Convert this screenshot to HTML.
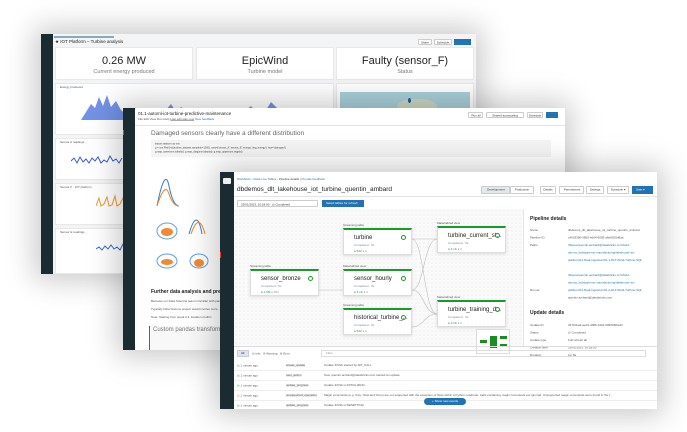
<!DOCTYPE html>
<html><head><meta charset="utf-8"><style>
*{margin:0;padding:0;box-sizing:border-box}
body{width:687px;height:432px;overflow:hidden;background:#fff;font-family:"Liberation Sans",sans-serif;position:relative;color:#222}
.a{position:absolute}
.win{position:absolute;background:#fff;box-shadow:0 0 28px 6px rgba(0,0,0,.22);overflow:hidden}
.sb{position:absolute;left:0;top:0;bottom:0;background:#1b2b32}
.card{position:absolute;background:#fff;border:1px solid #e8e8e8}
.t{position:absolute;white-space:nowrap}
.s{position:absolute;white-space:nowrap;font-size:6px;transform:scale(.5);transform-origin:0 0}
.node{position:absolute;background:#fff;border:1px solid #ddd;border-top:2px solid #1a9b29;box-shadow:0 1px 3px rgba(0,0,0,.12)}
.node b{position:absolute;left:10px;top:5px;font-size:6px;font-weight:normal;color:#222;white-space:nowrap}
.node i{position:absolute;left:10px;top:14px;font-size:6px;color:#888;font-style:normal;transform:scale(.5);transform-origin:0 0;white-space:nowrap}
.node s{position:absolute;left:10px;top:20px;font-size:6px;color:#1a9b29;text-decoration:none;transform:scale(.5);transform-origin:0 0;white-space:nowrap}
.node u{position:absolute;right:5px;top:5px;width:5px;height:5px;border:1px solid #1a9b29;border-radius:50%}
.lbl{position:absolute;font-size:6px;color:#555;transform:scale(.5);transform-origin:0 0;white-space:nowrap}
.btn{position:absolute;border:1px solid #ccc;background:#fff;color:#333;border-radius:1px;overflow:hidden}
.btn span{position:absolute;left:-50%;width:200%;top:0;text-align:center;font-size:6px;line-height:12px;transform:scale(.5);transform-origin:50% 0;white-space:nowrap}
.row{position:absolute;left:14px;right:0;height:10px;border-bottom:1px solid #eee;color:#555}
</style></head><body>

<!-- BACK WINDOW -->
<div class="win" style="left:41px;top:34px;width:435px;height:240px;background:#f3f4f5">
 <div class="sb" style="width:12px"></div>
 <div class="a" style="left:13px;top:2px;width:60px;height:1.5px;background:#8ab"></div>
 <div class="t" style="left:14px;top:5px;font-size:4.5px;color:#222">★ IOT Platform – Turbine analysis</div>
 <div class="btn" style="left:377px;top:5px;width:14px;height:6px"><span>Share</span></div>
 <div class="btn" style="left:393px;top:5px;width:18px;height:6px"><span>Schedule</span></div>
 <div class="a" style="left:413px;top:5px;width:17px;height:6px;background:#2272b4"></div>
 <div class="card" style="left:14px;top:13px;width:138px;height:33px"><div class="t" style="left:0;right:0;text-align:center;top:7px;font-size:11px">0.26 MW</div><div class="t" style="left:0;right:0;text-align:center;top:21px;font-size:5.5px;color:#777">Current energy produced</div></div>
 <div class="card" style="left:155px;top:13px;width:138px;height:33px"><div class="t" style="left:0;right:0;text-align:center;top:7px;font-size:11px">EpicWind</div><div class="t" style="left:0;right:0;text-align:center;top:21px;font-size:5.5px;color:#777">Turbine model</div></div>
 <div class="card" style="left:295px;top:13px;width:138px;height:33px"><div class="t" style="left:0;right:0;text-align:center;top:7px;font-size:11px">Faulty (sensor_F)</div><div class="t" style="left:0;right:0;text-align:center;top:21px;font-size:5.5px;color:#777">Status</div></div>
 <div class="card" style="left:14px;top:49px;width:279px;height:52px">
  <div class="s" style="left:4px;top:2px;color:#555">Energy produced</div>
  <svg class="a" style="left:25px;top:8px" width="250" height="30"><path d="M0 28 L5 20 L10 12 L14 16 L18 5 L22 14 L26 3 L30 15 L35 9 L40 18 L45 22 L50 28 L80 28 L85 18 L90 12 L95 20 L100 15 L110 22 L120 28 L140 28 L150 18 L160 22 L170 14 L180 26 L190 10 L200 20 L210 28 L250 28 Z" fill="#5b7fe0" opacity=".85"/></svg>
 </div>
 <div class="card" style="left:295px;top:49px;width:138px;height:90px"><div class="a" style="left:3px;top:8px;width:130px;height:80px;background:#a9cfd9"></div><div class="a" style="left:60px;top:15px;width:40px;height:20px;background:#cbd8c0;border-radius:40%"></div><div class="a" style="left:71px;top:14px;width:3px;height:5px;background:#1a5ba8;border-radius:50%"></div></div>
 <div class="card" style="left:14px;top:104px;width:279px;height:42px"><div class="s" style="left:4px;top:2px;color:#555">Sensor A readings</div><svg class="a" style="left:15px;top:12px" width="250" height="20"><path d="M0 10 L3 7 L6 12 L9 6 L12 11 L15 8 L18 12 L21 7 L24 10 L27 6 L30 12 L33 9 L36 11 L39 5 L42 10 L45 8 L48 12 L51 7" stroke="#3b5bd0" stroke-width="1" fill="none"/></svg></div>
 <div class="card" style="left:14px;top:149px;width:279px;height:42px"><div class="s" style="left:4px;top:2px;color:#555">Sensor F · IOT platform</div><svg class="a" style="left:40px;top:10px" width="60" height="20"><path d="M0 12 L3 4 L5 12 L8 10 L11 3 L13 12 L16 11 L19 2 L21 12 L24 10 L27 4 L29 12 L32 10 L35 3 L38 12" stroke="#f09a2c" stroke-width="1" fill="none"/></svg></div>
 <div class="card" style="left:14px;top:194px;width:279px;height:46px"><div class="s" style="left:4px;top:2px;color:#555">Sensor E readings</div><svg class="a" style="left:40px;top:10px" width="60" height="20"><path d="M0 10 L3 8 L6 11 L9 7 L12 10 L15 6 L18 10 L21 8 L24 11 L27 5 L30 10 L33 8 L36 10" stroke="#3b6bd0" stroke-width="1" fill="none"/></svg></div>
</div>

<!-- MIDDLE WINDOW -->
<div class="win" style="left:123px;top:108px;width:442px;height:242px">
 <div class="sb" style="width:12px"><div class="a" style="left:0;top:22px;width:1px;height:5px;background:#e33"></div></div>
 <div class="t" style="left:15px;top:3px;font-size:4.5px;color:#222">01.1-automl-iot-turbine-predictive-maintenance</div>
 <div class="s" style="left:15px;top:10px;color:#555">File  Edit  View  Run  Help   <u>Last edit was now</u>   <span style="color:#2272b4">Give feedback</span></div>
 <div class="btn" style="left:345px;top:4px;width:15px;height:6px"><span>Run all</span></div>
 <div class="btn" style="left:363px;top:4px;width:38px;height:6px"><span>Shared autoscaling</span></div>
 <div class="btn" style="left:404px;top:4px;width:16px;height:6px"><span>Schedule</span></div>
 <div class="a" style="left:423px;top:4px;width:12px;height:6px;background:#2272b4"></div>
 <div class="a" style="left:12px;top:17px;right:0;height:1px;background:#e4e4e4"></div>
 <div class="t" style="left:28px;top:22px;font-size:6.5px;color:#666">Damaged sensors clearly have a different distribution</div>
 <div class="a" style="left:28px;top:32px;width:400px;height:17px;background:#f4f4f4"></div>
 <div class="s" style="left:32px;top:34px;font-size:5px;color:#444;line-height:8px">import seaborn as sns<br>g = sns.PairGrid(turbine_dataset.sample(n=1000), vars=['sensor_A','sensor_E','energy','avg_energy'], hue='damaged')<br>g.map_lower(sns.kdeplot); g.map_diag(sns.kdeplot); g.map_upper(sns.regplot)</div>
 <svg class="a" style="left:24px;top:58px" width="75" height="110">
  <path d="M10 40 Q18 0 22 20 Q26 40 32 40" stroke="#2d7fd0" fill="none"/><path d="M10 40 Q18 15 22 28 Q26 40 32 40" stroke="#f07f22" fill="none"/>
  <ellipse cx="20" cy="65" rx="10" ry="8" fill="none" stroke="#5da0e0"/><ellipse cx="20" cy="66" rx="6" ry="4" fill="#f08a33"/>
  <path d="M42 68 Q50 40 55 68" stroke="#2d7fd0" fill="none"/><path d="M44 68 Q52 45 58 68" stroke="#f07f22" fill="none"/>
  <ellipse cx="20" cy="95" rx="10" ry="7" fill="none" stroke="#5da0e0"/><ellipse cx="20" cy="96" rx="6" ry="3" fill="#f08a33"/>
  <ellipse cx="52" cy="95" rx="9" ry="7" fill="none" stroke="#5da0e0"/><ellipse cx="52" cy="97" rx="5" ry="4" fill="#f08a33"/>
 </svg>
 <div class="t" style="left:28px;top:181px;font-size:5px;font-weight:bold">Further data analysis and preparation</div>
 <div class="s" style="left:28px;top:192px;color:#555">Because our Data Scientist team is familiar with pandas...</div>
 <div class="s" style="left:28px;top:200px;color:#555">Typically Data Science project would involve more...</div>
 <div class="s" style="left:28px;top:208px;color:#555">Note: Starting from spark 3.2, koalas is builtin</div>
 <div class="a" style="left:26px;top:218px;width:200px;height:24px;border-left:1px solid #2272b4;background:#f8f8f8"></div>
 <div class="t" style="left:30px;top:219px;font-size:6px;color:#777">Custom pandas transformation</div>
</div>

<!-- FRONT WINDOW -->
<div class="win" style="left:220px;top:172px;width:437px;height:237px">
 <div class="sb" style="width:14px"><div class="a" style="left:3px;top:6px;width:8px;height:6px;background:#eee;border-radius:1px"></div><div class="a" style="left:0;top:80px;width:1px;height:6px;background:#e33"></div></div>
 <div class="s" style="left:17px;top:6px;color:#2272b4">Workflows › Delta Live Tables › <span style="color:#333">Pipeline details</span> | Provide feedback</div>
 <div class="t" style="left:17px;top:14px;font-size:6.5px;color:#222">dbdemos_dlt_lakehouse_iot_turbine_quentin_ambard</div>
 <div class="btn" style="left:261px;top:14px;width:29px;height:8px;background:#e3e8ee"><span>Development</span></div>
 <div class="btn" style="left:290px;top:14px;width:24px;height:8px"><span>Production</span></div>
 <div class="btn" style="left:320px;top:14px;width:16px;height:8px"><span>Details</span></div>
 <div class="btn" style="left:339px;top:14px;width:25px;height:8px"><span>Permissions</span></div>
 <div class="btn" style="left:366px;top:14px;width:18px;height:8px"><span>Settings</span></div>
 <div class="btn" style="left:387px;top:14px;width:22px;height:8px"><span>Schedule ▾</span></div>
 <div class="a" style="left:412px;top:14px;width:21px;height:8px;background:#2272b4"><div class="s" style="left:4px;top:2px;color:#fff">Start ▾</div></div>
 <div class="a" style="left:14px;top:24px;right:0;height:1px;background:#e4e4e4"></div>
 <div class="btn" style="left:17px;top:28px;width:81px;height:7px"><div class="s" style="left:3px;top:1.5px">23/01/2023, 10:18:00 · ◎ Completed</div></div>
 <div class="a" style="left:102px;top:28px;width:42px;height:7px;background:#2272b4"><div class="s" style="left:4px;top:1.5px;color:#fff">Select tables for refresh</div></div>
 <div class="a" style="left:14px;top:37px;width:289px;height:137px;background:#fafafa;background-image:radial-gradient(#e4e4e4 0.6px,transparent 0.7px);background-size:4px 4px"></div>
 <svg class="a" style="left:14px;top:37px" width="289" height="137"><g stroke="#bbb" fill="none" stroke-width=".6"><path d="M85 81 L109 81"/><path d="M178 30 C190 30 190 105 203 105"/><path d="M178 30 C190 30 190 30 203 30"/><path d="M178 81 C190 81 190 30 203 30"/><path d="M178 81 C190 81 190 105 203 105"/><path d="M178 118 C190 118 190 105 203 105"/></g></svg>
 <div class="lbl" style="left:123px;top:52px">Streaming table</div>
 <div class="node" style="left:123px;top:56px;width:69px;height:27px"><b>turbine</b><i>Completed · 8s</i><s>● 542   <span style="color:#999">● 0</span></s><u></u></div>
 <div class="lbl" style="left:30px;top:93px">Streaming table</div>
 <div class="node" style="left:30px;top:97px;width:69px;height:27px"><b>sensor_bronze</b><i>Completed · 5s</i><s>● 1.5M   <span style="color:#999">● 800</span></s><u></u></div>
 <div class="lbl" style="left:123px;top:93px">Materialized view</div>
 <div class="node" style="left:123px;top:97px;width:69px;height:27px"><b>sensor_hourly</b><i>Completed · 8s</i><s>● 3.1K   <span style="color:#999">● 0</span></s><u></u></div>
 <div class="lbl" style="left:123px;top:132px">Streaming table</div>
 <div class="node" style="left:123px;top:136px;width:69px;height:27px"><b>historical_turbine_...</b><i>Completed · 6s</i><s>● 542   <span style="color:#999">● 0</span></s><u></u></div>
 <div class="lbl" style="left:217px;top:50px">Materialized view</div>
 <div class="node" style="left:217px;top:54px;width:69px;height:27px"><b>turbine_current_st...</b><i>Completed · 5s</i><s>● 3.1K   <span style="color:#999">● 0</span></s><u></u></div>
 <div class="lbl" style="left:217px;top:124px">Materialized view</div>
 <div class="node" style="left:217px;top:128px;width:69px;height:27px"><b>turbine_training_d...</b><i>Completed · 3s</i><s>● 3.1K   <span style="color:#999">● 0</span></s><u></u></div>
 <div class="a" style="left:256px;top:157px;width:34px;height:25px;background:#fff;border:1px solid #ddd"><div class="a" style="left:3px;top:10px;width:7px;height:3px;background:#1a8c22"></div><div class="a" style="left:13px;top:6px;width:7px;height:12px;background:#1a8c22"></div><div class="a" style="left:23px;top:6px;width:7px;height:3px;background:#1a8c22"></div><div class="a" style="left:23px;top:14px;width:7px;height:3px;background:#1a8c22"></div></div>
 <div class="a" style="left:303px;top:37px;width:1px;height:137px;background:#e4e4e4"></div>
 <div class="t" style="left:310px;top:44px;font-size:5px;font-weight:bold">Pipeline details</div>
 <div class="s" style="left:310px;top:55px;color:#555;line-height:15px">Name<br>Pipeline ID<br>Paths<br><br><br><br><br><br>Run as</div>
 <div class="s" style="left:348px;top:55px;color:#555;line-height:15px">dbdemos_dlt_lakehouse_iot_turbine_quentin_ambard<br>c4003380-0800-4d64-9005-a6d8020d6ab<br><span style="color:#2272b4;line-height:12px">/Repos/quentin.ambard@databricks.com/field-<br>demos_buildparemo-manufacturing/lakehouse-iot-<br>platform/01-Data-ingestion/01.1-DLT-Wind-Turbine-SQL<br><br>/Repos/quentin.ambard@databricks.com/field-<br>demos_buildparemo-manufacturing/lakehouse-iot-<br>platform/01-Data-ingestion/01.2-DLT-Wind-Turbine-SQL</span><br>quentin.ambard@databricks.com</div>
 <div class="t" style="left:310px;top:138px;font-size:5px;font-weight:bold">Update details</div>
 <div class="s" style="left:310px;top:150px;color:#555;line-height:15px">Update ID<br>Status<br>Update type<br>Creation time<br>Duration</div>
 <div class="s" style="left:348px;top:150px;color:#555;line-height:15px">3371bba3-aed3-4086-b3c0-6090fd90ed3<br>◎ Completed<br>Full refresh all<br>23/01/2023, 10:18:00<br>1m 8s</div>
 <div class="a" style="left:14px;top:174px;right:0;height:1px;background:#ddd"></div>
 <div class="a" style="left:17px;top:178px;width:12px;height:7px;background:#dde6ef;border:1px solid #ccd"><div class="s" style="left:3px;top:1px">All</div></div>
 <div class="s" style="left:32px;top:180px;color:#555">◎ Info  &nbsp; ⊘ Warning &nbsp; ⊘ Error</div>
 <div class="a" style="left:101px;top:178px;width:325px;height:7px;border:1px solid #ddd"><div class="s" style="left:4px;top:1px;color:#999">Filter...</div></div>
 <div class="row" style="top:189px"><div class="s" style="left:3px;top:3px;color:#1a9b29">◎ <span style="color:#555">1 minute ago</span></div><div class="s" style="left:52px;top:3px;background:#eee">create_update</div><div class="s" style="left:90px;top:3px">Update 337ab started by API_CALL</div></div>
 <div class="row" style="top:199px"><div class="s" style="left:3px;top:3px;color:#1a9b29">◎ <span style="color:#555">1 minute ago</span></div><div class="s" style="left:52px;top:3px;background:#eee">user_action</div><div class="s" style="left:90px;top:3px">User quentin.ambard@databricks.com started an update.</div></div>
 <div class="row" style="top:209px"><div class="s" style="left:3px;top:3px;color:#1a9b29">◎ <span style="color:#555">1 minute ago</span></div><div class="s" style="left:52px;top:3px;background:#eee">update_progress</div><div class="s" style="left:90px;top:3px">Update 337ab is INITIALIZING.</div></div>
 <div class="row" style="top:219px"><div class="s" style="left:3px;top:3px;color:#e0752b">◎ <span style="color:#555">1 minute ago</span></div><div class="s" style="left:52px;top:3px;background:#eee">unsupported_operation</div><div class="s" style="left:90px;top:3px">Magic commands (e.g. %py, %sql and %run) are not supported with the exception of %pip within a Python notebook. Cells containing magic commands are ignored. Unsupported magic commands were found in the f...</div></div>
 <div class="row" style="top:229px"><div class="s" style="left:3px;top:3px;color:#1a9b29">◎ <span style="color:#555">1 minute ago</span></div><div class="s" style="left:52px;top:3px;background:#eee">update_progress</div><div class="s" style="left:90px;top:3px">Update 337ab is RESETTING.</div></div>
 <div class="a" style="left:204px;top:226px;width:42px;height:7px;background:#2272b4;border-radius:4px"><div class="s" style="left:8px;top:1.5px;color:#fff">+ Show new events</div></div>
</div>
</body></html>
